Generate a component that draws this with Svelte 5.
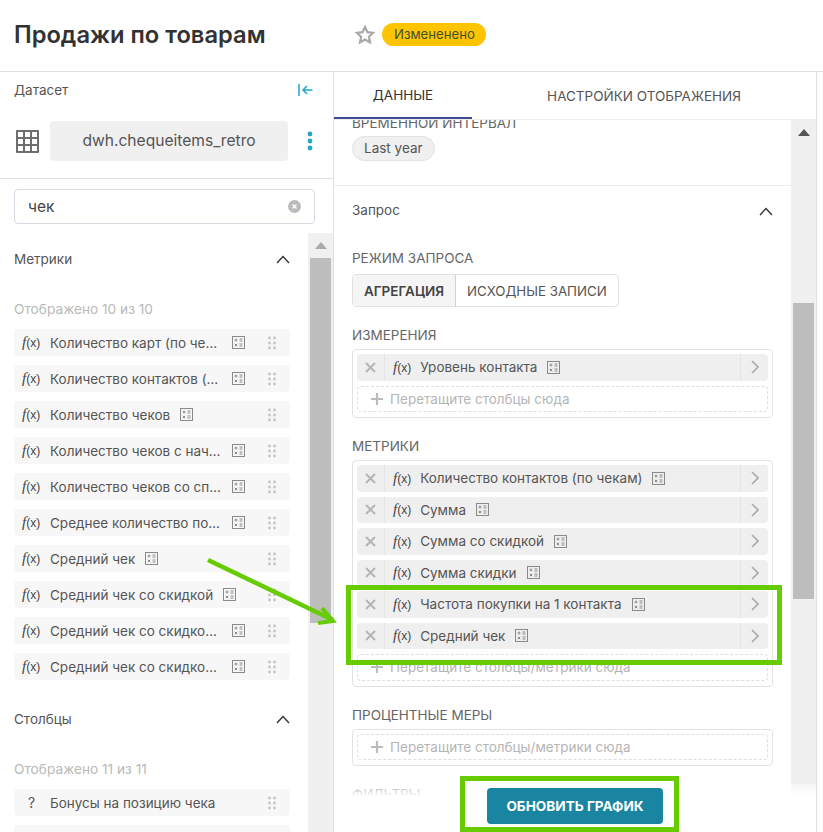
<script>
	const metrics = [
		{ name: 'Количество карт (по чекам)', calc: true },
		{ name: 'Количество контактов (по чекам)', calc: true },
		{ name: 'Количество чеков', calc: true },
		{ name: 'Количество чеков с начислением', calc: true },
		{ name: 'Количество чеков со списанием', calc: true },
		{ name: 'Среднее количество позиций', calc: true },
		{ name: 'Средний чек', calc: true },
		{ name: 'Средний чек со скидкой', calc: true },
		{ name: 'Средний чек со скидкой на позицию', calc: true },
		{ name: 'Средний чек со скидкой по карте', calc: true }
	];
	const columns = [
		{ name: 'Бонусы на позицию чека', calc: false },
		{ name: 'Дата чека', calc: false }
	];
	const dims = ['Уровень контакта'];
	const picked = [
		'Количество контактов (по чекам)',
		'Сумма',
		'Сумма со скидкой',
		'Сумма скидки',
		'Частота покупки на 1 контакта',
		'Средний чек'
	];
</script>

{#snippet fx()}
	<span class="fx"><i>f</i>(x)</span>
{/snippet}

{#snippet calc()}
	<svg class="calc" width="13" height="13" viewBox="0 0 13 13" fill="none" stroke="#8a8a8a" stroke-width="1">
		<rect x="0.5" y="0.5" width="12" height="12" />
		<path d="M2.500 4h3M4 2.500v3M7.500 3h3M7.500 5h3M2.800 7.800l2.400 2.400M5.200 7.800l-2.400 2.400M7.500 8h3M7.500 10h3" />
	</svg>
{/snippet}

{#snippet grip()}
	<svg class="grip" width="8" height="14" viewBox="0 0 8 14" fill="#c4c4c4">
		{#each [2, 7, 12] as y}
			<circle cx="1.500" cy={y} r="1.400" /><circle cx="6.500" cy={y} r="1.400" />
		{/each}
	</svg>
{/snippet}

{#snippet chevron()}
	<svg class="chev" width="14" height="9" viewBox="0 0 14 9" fill="none" stroke="#333" stroke-width="1.400">
		<path d="M1 8l6-6.500L13 8" />
	</svg>
{/snippet}

{#snippet listItem(item)}
	<div class="item">
		<span class="type">
			{#if item.calc}{@render fx()}{:else}<span class="q">?</span>{/if}
		</span>
		<span class="label">{item.name}</span>
		{#if item.calc}{@render calc()}{/if}
		<span class="grip-wrap">{@render grip()}</span>
	</div>
{/snippet}

{#snippet pill(name)}
	<div class="pill">
		<span class="pill-x">
			<svg width="11" height="11" viewBox="0 0 11 11" stroke="#b5b5b5" stroke-width="2"><path d="M1 1l9 9M10 1l-9 9" /></svg>
		</span>
		<span class="pill-body">
			{@render fx()}
			<span class="pill-name">{name}</span>
			{@render calc()}
		</span>
		<span class="pill-go">
			<svg width="8" height="14" viewBox="0 0 8 14" fill="none" stroke="#aaa" stroke-width="1.600"><path d="M1 1l6 6-6 6" /></svg>
		</span>
	</div>
{/snippet}

{#snippet drop(text)}
	<div class="drop">
		<svg width="12" height="12" viewBox="0 0 12 12" stroke="#bbb" stroke-width="2.200"><path d="M6 0v12M0 6h12" /></svg>
		<span>{text}</span>
	</div>
{/snippet}

<div class="page">
	<header class="top">
		<h1>Продажи по товарам</h1>
		<svg class="star" width="20" height="19" viewBox="0 0 20 19" fill="none" stroke="#a8a8a8" stroke-width="2.200">
			<path d="M10 2l2.400 5.200 5.600.7-4.100 3.900 1.100 5.600-5-2.800-5 2.800 1.100-5.600L2 7.900l5.600-.7z" />
		</svg>
		<span class="badge">Измененено</span>
	</header>

	<div class="panels">
		<aside class="left">
			<div class="ds-title">
				<span>Датасет</span>
				<svg width="15" height="12" viewBox="0 0 15 12" fill="none" stroke="#20a7c9" stroke-width="1.500">
					<path d="M1 0v12M14.500 6H5M9 2L5 6l4 4" />
				</svg>
			</div>
			<div class="ds-row">
				<svg class="table" width="23" height="23" viewBox="0 0 23 23" fill="#6e6e6e">
					<path fill-rule="evenodd" d="M1 0h21a1 1 0 0 1 1 1v21a1 1 0 0 1-1 1H1a1 1 0 0 1-1-1V1a1 1 0 0 1 1-1zM2 2v5h5V2zm7 0v5h5V2zm7 0v5h5V2zM2 9v5h5V9zm7 0v5h5V9zm7 0v5h5V9zM2 16v5h5v-5zm7 0v5h5v-5zm7 0v5h5v-5z" />
				</svg>
				<div class="ds-name">dwh.chequeitems_retro</div>
				<svg class="dots" width="6" height="20" viewBox="0 0 6 20" fill="#20a7c9">
					<circle cx="3" cy="3" r="2.400" /><circle cx="3" cy="10" r="2.400" /><circle cx="3" cy="17" r="2.400" />
				</svg>
			</div>
			<div class="search-wrap">
				<div class="search">
					<span>чек</span>
					<svg width="13" height="13" viewBox="0 0 13 13">
						<circle cx="6.500" cy="6.500" r="6.500" fill="#bbb" />
						<path d="M4.500 4.500l4 4M8.500 4.500l-4 4" stroke="#fff" stroke-width="1.300" />
					</svg>
				</div>
			</div>
			<div class="lists">
				<div class="list-body">
					<div class="sec-head">
						<span>Метрики</span>
						{@render chevron()}
					</div>
					<div class="shown">Отображено 10 из 10</div>
					<div class="items">
						{#each metrics as m}{@render listItem(m)}{/each}
					</div>
					<div class="sec-head second">
						<span>Столбцы</span>
						{@render chevron()}
					</div>
					<div class="shown">Отображено 11 из 11</div>
					<div class="items">
						{#each columns as c}{@render listItem(c)}{/each}
					</div>
				</div>
				<div class="bar">
					<span class="arrow light"></span>
					<span class="thumb left-thumb"></span>
				</div>
			</div>
		</aside>

		<main class="right">
			<nav class="tabs">
				<span class="tab active">ДАННЫЕ</span>
				<span class="tab">НАСТРОЙКИ ОТОБРАЖЕНИЯ</span>
			</nav>
			<div class="scroller">
				<div class="form">
					<div class="time">
						<div class="cap">ВРЕМЕННОЙ ИНТЕРВАЛ</div>
						<span class="chip">Last year</span>
					</div>
					<div class="query">
						<div class="query-head">
							<span>Запрос</span>
							{@render chevron()}
						</div>
						<div class="cap">РЕЖИМ ЗАПРОСА</div>
						<div class="switch">
							<span class="on">АГРЕГАЦИЯ</span>
							<span>ИСХОДНЫЕ ЗАПИСИ</span>
						</div>
						<div class="cap field">ИЗМЕРЕНИЯ</div>
						<div class="box">
							{#each dims as d}{@render pill(d)}{/each}
							{@render drop('Перетащите столбцы сюда')}
						</div>
						<div class="cap field">МЕТРИКИ</div>
						<div class="box">
							{#each picked as p}{@render pill(p)}{/each}
							{@render drop('Перетащите столбцы/метрики сюда')}
						</div>
						<div class="cap field">ПРОЦЕНТНЫЕ МЕРЫ</div>
						<div class="box">
							{@render drop('Перетащите столбцы/метрики сюда')}
						</div>
						<div class="cap field">ФИЛЬТРЫ</div>
					</div>
				</div>
				<div class="bar">
					<span class="arrow"></span>
					<span class="thumb right-thumb"></span>
				</div>
				<div class="footer">
					<button class="update">ОБНОВИТЬ ГРАФИК</button>
				</div>
			</div>
		</main>
	</div>

	<!-- annotations drawn on top of the screenshot -->
	<svg class="marks" width="823" height="832" viewBox="0 0 823 832" fill="none" stroke="#66cc00">
		<rect x="348.500" y="587.500" width="431" height="75" stroke-width="5" />
		<rect x="462.500" y="778.500" width="214" height="51" stroke-width="5" />
		<path d="M208 560L333 620" stroke-width="4.500" />
		<path d="M322 608L333 621L318 623" stroke-width="4" />
	</svg>
</div>

<style>
	:global(body) {
		font-family: Inter, 'Noto Sans', sans-serif;
		color: #444;
	}

	.page {
		position: relative;
		width: 823px;
		height: 832px;
		overflow: hidden;
		background: #fff;
		font-size: 13.5px;
	}

	.top {
		display: flex;
		align-items: center;
		height: 72px;
		box-sizing: border-box;
		padding-left: 14px;
		padding-bottom: 2px;
		border-bottom: 1px solid #e0e0e0;
	}

	h1 {
		width: 341px;
		margin: 0;
		font-size: 23.7px;
		font-weight: 600;
		color: #323232;
		white-space: nowrap;
	}

	.badge {
		margin-left: 7px;
		padding: 0 11px 0 12px;
		height: 23px;
		line-height: 23px;
		border-radius: 12px;
		background: #ffc400;
		color: #44503a;
		font-size: 13.2px;
	}

	.panels {
		display: flex;
		height: 760px;
	}

	.left {
		width: 334px;
		box-sizing: border-box;
		border-right: 1px solid #e0e0e0;
		display: flex;
		flex-direction: column;
	}

	.ds-title {
		display: flex;
		justify-content: space-between;
		align-items: center;
		height: 36px;
		padding: 0 20px 0 14px;
		color: #555;
	}

	.ds-row {
		display: flex;
		align-items: center;
		height: 71px;
		box-sizing: border-box;
		padding-left: 16px;
		padding-bottom: 4px;
		border-bottom: 1px solid #e0e0e0;
	}

	.ds-name {
		width: 238px;
		height: 40px;
		margin-left: 11px;
		border-radius: 4px;
		background: #f0f0f0;
		text-align: center;
		line-height: 40px;
		font-size: 15.6px;
		color: #555;
	}

	.dots {
		margin-left: 19px;
	}

	.search-wrap {
		padding: 10px 18px 9px 14px;
	}

	.search {
		display: flex;
		justify-content: space-between;
		align-items: center;
		height: 35px;
		box-sizing: border-box;
		padding: 0 13px;
		border: 1px solid #d9d9e3;
		border-radius: 4px;
		font-size: 15.5px;
		color: #444;
	}

	.lists {
		flex: 1;
		display: flex;
		min-height: 0;
		overflow: hidden;
	}

	.list-body {
		width: 308px;
		padding: 0 18px 0 14px;
		box-sizing: border-box;
	}

	.sec-head {
		display: flex;
		justify-content: space-between;
		align-items: center;
		height: 20px;
		margin-top: 16px;
		color: #555;
	}

	.sec-head.second {
		margin-top: 29px;
	}

	.shown {
		margin-top: 32px;
		height: 16px;
		line-height: 16px;
		color: #b9b9b9;
		font-size: 13.7px;
	}

	.items {
		display: flex;
		flex-direction: column;
		gap: 9px;
		margin-top: 12px;
	}

	.item {
		display: flex;
		align-items: center;
		height: 27px;
		flex: none;
		padding-right: 14px;
		border-radius: 4px;
		background: #f7f7f7;
		color: #555;
	}

	.type {
		width: 36px;
		flex: none;
		padding-left: 8px;
		box-sizing: border-box;
	}

	.q {
		padding-left: 6px;
		font-size: 14px;
	}

	.fx {
		font-family: 'Liberation Sans', sans-serif;
		font-size: 12px;
		color: #444;
		white-space: nowrap;
	}

	.fx i {
		font-family: 'Liberation Serif', serif;
		font-size: 15px;
	}

	.label {
		max-width: 172px;
		overflow: hidden;
		white-space: nowrap;
		text-overflow: ellipsis;
	}

	.calc {
		flex: none;
		margin-left: 10px;
	}

	.grip-wrap {
		display: flex;
		margin-left: auto;
	}

	.bar {
		position: relative;
		width: 25px;
		flex: none;
		background: #f0f0f0;
	}

	.arrow {
		display: block;
		width: 0;
		margin: 9px auto 0;
		border: 6px solid transparent;
		border-top: 0;
		border-bottom: 7px solid #555;
	}

	.arrow.light {
		border-bottom-color: #aaa;
	}

	.thumb {
		display: block;
		width: 21px;
		margin: 0 auto;
		background: #bdbdbd;
	}

	.left-thumb {
		height: 365px;
		margin-top: 9px;
	}

	.right-thumb {
		height: 296px;
		margin-top: 167px;
	}

	.right {
		width: 483px;
		box-sizing: border-box;
		border-right: 1px solid #e0e0e0;
		display: flex;
		flex-direction: column;
	}

	.tabs {
		display: flex;
		height: 48px;
		flex: none;
		box-sizing: border-box;
		border-bottom: 1px solid #ececec;
		color: #555;
	}

	.tab {
		display: flex;
		align-items: center;
		justify-content: center;
		width: 138px;
		height: 47px;
		box-sizing: border-box;
	}

	.tab:last-child {
		width: 206px;
		margin-left: 69px;
	}

	.tab.active {
		color: #333;
		border-bottom: 2px solid #3f4d8c;
	}

	.scroller {
		position: relative;
		flex: 1;
		display: flex;
		min-height: 0;
		overflow: hidden;
	}

	.form {
		width: 457px;
		flex: none;
		margin-top: -5px;
	}

	.cap {
		height: 16px;
		line-height: 16px;
		color: #666;
		white-space: nowrap;
	}

	.time {
		height: 70px;
		padding: 0 18px;
		border-bottom: 1px solid #ececec;
	}

	.chip {
		display: inline-block;
		margin-top: 5px;
		height: 25px;
		line-height: 23px;
		box-sizing: border-box;
		padding: 0 11px;
		border: 1px solid #e2e2e2;
		border-radius: 13px;
		background: #f0f0f0;
		color: #555;
	}

	.query {
		padding: 14px 18px 0;
	}

	.query-head {
		display: flex;
		justify-content: space-between;
		align-items: center;
		height: 20px;
		margin-bottom: 30px;
		color: #555;
	}

	.query-head .chev {
		margin-top: 3px;
	}

	.switch {
		display: inline-flex;
		height: 33px;
		margin-top: 8px;
		box-sizing: border-box;
		border: 1px solid #e2e2e2;
		border-radius: 4px;
		overflow: hidden;
		font-size: 13.3px;
		color: #555;
	}

	.switch span {
		display: flex;
		align-items: center;
		padding: 0 11px;
	}

	.switch .on {
		width: 103px;
		box-sizing: border-box;
		justify-content: center;
		background: #f5f5f5;
		border-right: 1px solid #d0d0d0;
		font-size: 13.5px;
		font-weight: 600;
		color: #444;
	}

	.field {
		margin-top: 20px;
	}

	.box {
		display: flex;
		flex-direction: column;
		gap: 5px;
		margin-top: 6px;
		padding: 4px 4px 5px;
		width: 421px;
		box-sizing: border-box;
		border: 1px solid #e2e2e2;
		border-radius: 4px;
	}

	.pill {
		display: flex;
		align-items: stretch;
		height: 26.5px;
		flex: none;
		border-radius: 4px;
		background: #efefef;
		color: #555;
	}

	.pill-x {
		display: flex;
		align-items: center;
		justify-content: center;
		width: 27px;
		border-right: 1px solid #e4e4e4;
	}

	.pill-body {
		flex: 1;
		display: flex;
		align-items: center;
		padding-left: 8px;
	}

	.pill-name {
		margin-left: 9px;
	}

	.pill-go {
		display: flex;
		align-items: center;
		justify-content: center;
		width: 27px;
		border-left: 1px solid #e4e4e4;
	}

	.drop {
		display: flex;
		align-items: center;
		gap: 7px;
		height: 26.5px;
		box-sizing: border-box;
		padding-left: 13px;
		border: 1px dashed #dedede;
		border-radius: 4px;
		color: #b5b5b5;
	}

	.footer {
		position: absolute;
		left: 0;
		right: 0;
		bottom: 0;
		height: 48px;
		display: flex;
		justify-content: center;
		padding-top: 4px;
		box-sizing: border-box;
		background: linear-gradient(to bottom, rgba(255, 255, 255, 0.4), #fff 26%);
	}

	.update {
		width: 176px;
		height: 36px;
		border: 0;
		border-radius: 4px;
		background: #1a85a0;
		color: #fff;
		font-family: inherit;
		font-size: 13.6px;
		font-weight: 700;
	}

	.marks {
		position: absolute;
		left: 0;
		top: 0;
		pointer-events: none;
	}
</style>
